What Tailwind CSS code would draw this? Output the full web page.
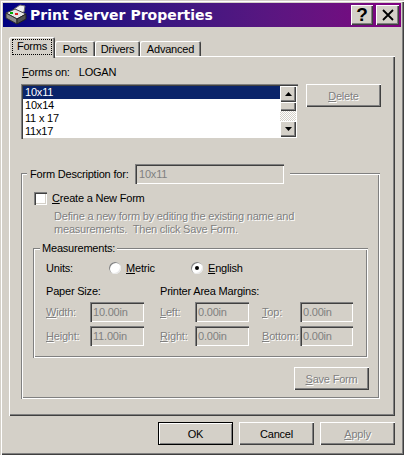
<!DOCTYPE html>
<html lang="en">
<head>
  <meta charset="UTF-8" />
  <title>Print Server Properties</title>
  <script src="https://cdn.jsdelivr.net/npm/@tailwindcss/browser@4"></script>
</head>
<body class="m-0 bg-[#d4d0c8]">
  <div class="w-[404px] h-[455px] overflow-hidden bg-[#d4d0c8] pt-[3px] px-[3px] flex flex-col font-['Liberation_Sans',sans-serif] text-[11px] tracking-[-0.2px] leading-[14px] text-black shadow-[inset_1px_1px_0_#d4d0c8,inset_2px_2px_0_#fff,inset_-1px_-1px_0_#404040,inset_-2px_-2px_0_#808080]">

    <!-- title bar -->
    <div class="w-[398px] h-[24px] shrink-0 flex items-center bg-linear-to-r from-[#000080] to-[#800080]">
      <svg class="ml-[2px] w-[22px] h-[22px] shrink-0" viewBox="0 0 22 22">
        <path d="M9 5 L15 1 L20 2 L19 8 L12 10 Z" fill="#f0f0f0" stroke="#707070" stroke-width="1"/>
        <path d="M1 9 L10 5 L21 10 L12 15 Z" fill="#e4e4e4" stroke="#404040" stroke-width="1"/>
        <path d="M1 9 L12 15 L12 20 L1 14 Z" fill="#8c8c8c" stroke="#303030" stroke-width="1"/>
        <path d="M12 15 L21 10 L21 15 L12 20 Z" fill="#505050" stroke="#202020" stroke-width="1"/>
        <rect x="5" y="8" width="3" height="2" fill="#00b000"/>
        <rect x="10" y="9" width="3" height="2" fill="#e02020"/>
      </svg>
      <span class="ml-[3px] font-['DejaVu_Sans',sans-serif] font-bold text-[14px] tracking-normal text-white leading-[20px]">Print Server Properties</span>
      <div class="ml-auto flex items-center mr-[2px] gap-[3px]">
        <div class="w-[22px] h-[20px] flex items-center justify-center bg-[#d4d0c8] font-bold text-[19px] shadow-[inset_1px_1px_0_#fff,inset_-1px_-1px_0_#404040,inset_-2px_-2px_0_#808080]">?</div>
        <div class="w-[23px] h-[20px] flex items-center justify-center bg-[#d4d0c8] shadow-[inset_1px_1px_0_#fff,inset_-1px_-1px_0_#404040,inset_-2px_-2px_0_#808080]">
          <svg class="w-[12px] h-[12px]" viewBox="0 0 12 12"><path d="M1 1 L11 11 M11 1 L1 11" stroke="#000" stroke-width="1.8" fill="none"/></svg>
        </div>
      </div>
    </div>

    <!-- tabs -->
    <div class="mt-[10px] ml-[6px] h-[19px] shrink-0 flex items-start">
      <div class="relative z-10 w-[46px] h-[21px] bg-[#d4d0c8] pt-[2px] px-[3px] rounded-t-[2px] shadow-[inset_1px_1px_0_#fff,inset_-1px_0_0_#404040,inset_-2px_0_0_#808080]">
        <div class="h-[16px] pb-[2px] border border-dotted border-black flex items-center justify-center">Forms</div>
      </div>
      <div class="mt-[4px] w-[40px] h-[15px] flex items-center justify-center rounded-t-[2px] shadow-[inset_1px_1px_0_#fff,inset_-1px_0_0_#404040,inset_-2px_0_0_#808080]">Ports</div>
      <div class="mt-[4px] w-[45px] h-[15px] flex items-center justify-center rounded-t-[2px] shadow-[inset_1px_1px_0_#fff,inset_-1px_0_0_#404040,inset_-2px_0_0_#808080]">Drivers</div>
      <div class="mt-[4px] w-[61px] h-[15px] flex items-center justify-center rounded-t-[2px] shadow-[inset_1px_1px_0_#fff,inset_-1px_0_0_#404040,inset_-2px_0_0_#808080]">Advanced</div>
    </div>

    <!-- tab pane -->
    <div class="ml-[6px] w-[386px] h-[360px] shrink-0 pt-[9px] pl-[12px] shadow-[inset_1px_1px_0_#fff,inset_-1px_-1px_0_#404040,inset_-2px_-2px_0_#808080]">
      <div class="h-[14px]"><span class="ml-[1px]"><span class="underline">F</span>orms on:</span><span class="ml-[9px]">LOGAN</span></div>

      <div class="mt-[5px] flex items-start">
        <div class="w-[277px] h-[55px] p-[2px] flex bg-white shadow-[inset_1px_1px_0_#808080,inset_2px_2px_0_#404040,inset_-1px_-1px_0_#d4d0c8,inset_-2px_-2px_0_#fff]">
          <div class="flex-1 leading-[13px]">
            <div class="bg-[#0a246a] text-white px-[2px]">10x11</div>
            <div class="px-[2px]">10x14</div>
            <div class="px-[2px]">11 x 17</div>
            <div class="px-[2px]">11x17</div>
          </div>
          <div class="w-[16px] flex flex-col bg-[repeating-conic-gradient(#fff_0_25%,#d4d0c8_0_50%)] bg-[length:2px_2px]">
            <div class="h-[16px] flex items-center justify-center bg-[#d4d0c8] shadow-[inset_1px_1px_0_#fff,inset_-1px_-1px_0_#404040,inset_-2px_-2px_0_#808080]">
              <svg class="w-[7px] h-[4px]" viewBox="0 0 7 4"><path d="M3.5 0 L7 4 L0 4 Z" fill="#000"/></svg>
            </div>
            <div class="h-[9px] bg-[#d4d0c8] shadow-[inset_1px_1px_0_#fff,inset_-1px_-1px_0_#404040,inset_-2px_-2px_0_#808080]"></div>
            <div class="mt-auto h-[16px] flex items-center justify-center bg-[#d4d0c8] shadow-[inset_1px_1px_0_#fff,inset_-1px_-1px_0_#404040,inset_-2px_-2px_0_#808080]">
              <svg class="w-[7px] h-[4px]" viewBox="0 0 7 4"><path d="M0 0 L7 0 L3.5 4 Z" fill="#000"/></svg>
            </div>
          </div>
        </div>
        <div class="ml-[8px] w-[75px] h-[23px] flex items-center justify-center text-[#808080] [text-shadow:1px_1px_0_#fff] shadow-[inset_1px_1px_0_#fff,inset_-1px_-1px_0_#404040,inset_-2px_-2px_0_#808080]"><span><span class="underline">D</span>elete</span></div>
      </div>

      <!-- form description group -->
      <div class="relative mt-[34px] w-[359px] h-[226px] px-[12px] pt-[18px] shadow-[inset_1px_1px_0_#808080,inset_2px_2px_0_#fff,inset_-1px_-1px_0_#fff,inset_-2px_-2px_0_#808080]">
        <div class="absolute left-[6px] top-[-9px] w-[263px] h-[20px] pl-[3px] flex items-center bg-[#d4d0c8]">
          <span class="w-[105px]">Form Description for:</span>
          <div class="w-[149px] h-[20px] pl-[4px] flex items-center text-[#808080] shadow-[inset_1px_1px_0_#808080,inset_2px_2px_0_#404040,inset_-1px_-1px_0_#fff,inset_-2px_-2px_0_#d4d0c8]">10x11</div>
        </div>

        <div class="flex items-center h-[14px]">
          <div class="ml-[1px] w-[13px] h-[13px] bg-white shadow-[inset_1px_1px_0_#808080,inset_2px_2px_0_#404040,inset_-1px_-1px_0_#fff,inset_-2px_-2px_0_#d4d0c8]"></div>
          <span class="ml-[5px]"><span class="underline">C</span>reate a New Form</span>
        </div>
        <div class="mt-[5px] ml-[21px] text-[#808080] leading-[13px] [text-shadow:1px_1px_0_#fff]">
          <div>Define a new form by editing the existing name and</div>
          <div>measurements.&nbsp; Then click Save Form.</div>
        </div>

        <!-- measurements group -->
        <div class="relative mt-[12px] w-[335px] h-[110px] pt-[13px] pl-[13px] shadow-[inset_1px_1px_0_#808080,inset_2px_2px_0_#fff,inset_-1px_-1px_0_#fff,inset_-2px_-2px_0_#808080]">
          <span class="absolute left-[7px] top-[-7px] px-[2px] bg-[#d4d0c8]">Measurements:</span>

          <div class="flex items-center h-[14px]">
            <span class="w-[63px]">Units:</span>
            <div class="w-[82px] flex items-center">
              <div class="w-[12px] h-[12px] rounded-full bg-white shadow-[inset_1px_1px_0_#808080,inset_-1px_-1px_0_#e8e8e8]"></div>
              <span class="ml-[5px]"><span class="underline">M</span>etric</span>
            </div>
            <div class="flex items-center">
              <div class="w-[12px] h-[12px] rounded-full bg-white flex items-center justify-center shadow-[inset_1px_1px_0_#808080,inset_-1px_-1px_0_#e8e8e8]">
                <div class="w-[4px] h-[4px] rounded-full bg-black"></div>
              </div>
              <span class="ml-[5px]"><span class="underline">E</span>nglish</span>
            </div>
          </div>

          <div class="mt-[9px] flex h-[14px]">
            <span class="w-[114px]">Paper Size:</span>
            <span>Printer Area Margins:</span>
          </div>

          <div class="mt-[4px] flex items-center h-[20px] text-[#808080] [text-shadow:1px_1px_0_#fff]">
            <span class="w-[44px]"><span class="underline">W</span>idth:</span>
            <div class="w-[54px] h-[20px] pl-[3px] flex items-center [text-shadow:none] shadow-[inset_1px_1px_0_#808080,inset_2px_2px_0_#404040,inset_-1px_-1px_0_#fff,inset_-2px_-2px_0_#d4d0c8]">10.00in</div>
            <span class="ml-[16px] w-[35px]"><span class="underline">L</span>eft:</span>
            <div class="w-[54px] h-[20px] pl-[3px] flex items-center [text-shadow:none] shadow-[inset_1px_1px_0_#808080,inset_2px_2px_0_#404040,inset_-1px_-1px_0_#fff,inset_-2px_-2px_0_#d4d0c8]">0.00in</div>
            <span class="ml-[13px] w-[38px]"><span class="underline">T</span>op:</span>
            <div class="w-[53px] h-[20px] pl-[3px] flex items-center [text-shadow:none] shadow-[inset_1px_1px_0_#808080,inset_2px_2px_0_#404040,inset_-1px_-1px_0_#fff,inset_-2px_-2px_0_#d4d0c8]">0.00in</div>
          </div>

          <div class="mt-[4px] flex items-center h-[20px] text-[#808080] [text-shadow:1px_1px_0_#fff]">
            <span class="w-[44px]"><span class="underline">H</span>eight:</span>
            <div class="w-[54px] h-[20px] pl-[3px] flex items-center [text-shadow:none] shadow-[inset_1px_1px_0_#808080,inset_2px_2px_0_#404040,inset_-1px_-1px_0_#fff,inset_-2px_-2px_0_#d4d0c8]">11.00in</div>
            <span class="ml-[16px] w-[35px]"><span class="underline">R</span>ight:</span>
            <div class="w-[54px] h-[20px] pl-[3px] flex items-center [text-shadow:none] shadow-[inset_1px_1px_0_#808080,inset_2px_2px_0_#404040,inset_-1px_-1px_0_#fff,inset_-2px_-2px_0_#d4d0c8]">0.00in</div>
            <span class="ml-[13px] w-[38px]"><span class="underline">B</span>ottom:</span>
            <div class="w-[53px] h-[20px] pl-[3px] flex items-center [text-shadow:none] shadow-[inset_1px_1px_0_#808080,inset_2px_2px_0_#404040,inset_-1px_-1px_0_#fff,inset_-2px_-2px_0_#d4d0c8]">0.00in</div>
          </div>
        </div>

        <div class="mt-[9px] ml-[261px] w-[75px] h-[23px] flex items-center justify-center text-[#808080] [text-shadow:1px_1px_0_#fff] shadow-[inset_1px_1px_0_#fff,inset_-1px_-1px_0_#404040,inset_-2px_-2px_0_#808080]"><span><span class="underline">S</span>ave Form</span></div>
      </div>
    </div>

    <!-- dialog buttons -->
    <div class="mt-[6px] ml-[155px] flex gap-[6px]">
      <div class="w-[75px] h-[23px] flex items-center justify-center border border-black shadow-[inset_1px_1px_0_#fff,inset_-1px_-1px_0_#808080]">OK</div>
      <div class="w-[75px] h-[23px] flex items-center justify-center shadow-[inset_1px_1px_0_#fff,inset_-1px_-1px_0_#404040,inset_-2px_-2px_0_#808080]">Cancel</div>
      <div class="w-[75px] h-[23px] flex items-center justify-center text-[#808080] [text-shadow:1px_1px_0_#fff] shadow-[inset_1px_1px_0_#fff,inset_-1px_-1px_0_#404040,inset_-2px_-2px_0_#808080]"><span><span class="underline">A</span>pply</span></div>
    </div>
  </div>
</body>
</html>
